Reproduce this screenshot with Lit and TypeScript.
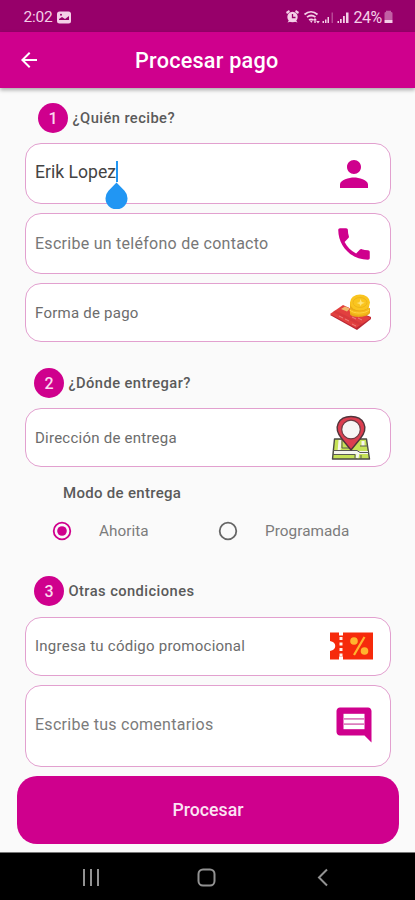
import { LitElement, html, css, svg } from "lit";
import { customElement, property } from "lit/decorators.js";

const icons = {
  person: svg`<svg width="42" height="42" viewBox="0 0 24 24"><path fill="#cf008d" d="M12 12c2.21 0 4-1.79 4-4s-1.79-4-4-4-4 1.790-4 4 1.790 4 4 4zm0 2c-2.670 0-8 1.340-8 4v2h16v-2c0-2.660-5.330-4-8-4z"/></svg>`,
  phone: svg`<svg width="42" height="42" viewBox="0 0 24 24"><path fill="#cf008d" d="M6.62 10.79c1.44 2.83 3.76 5.14 6.59 6.59l2.2-2.2c.27-.27.67-.36 1.02-.24 1.12.37 2.33.57 3.57.57.55 0 1 .45 1 1V20c0 .55-.45 1-1 1-9.39 0-17-7.61-17-17 0-.55.45-1 1-1h3.5c.55 0 1 .45 1 1 0 1.25.2 2.45.57 3.57.11.35.03.74-.25 1.02l-2.2 2.2z"/></svg>`,
  card: svg`<svg width="42" height="42" viewBox="0 0 42 42">
    <path fill="#b92735" d="M0 23l27 15 14-11v-2L14 14z"/>
    <path fill="#e2403f" d="M0 22L13 13 41 26 26 36z"/>
    <path fill="#c9303a" d="M3 20l2-1.500 27 13-2 2z" opacity=".45"/>
    <path fill="#efb66a" d="M11 17l4-2.500 5 2-3 3z"/>
    <path d="M9 24l4 2m2 1l4 2m3-4l4 2m2-1l4 2m-10 4l4 2" stroke="#f09090" stroke-width=".8"/>
    <path fill="#e9ab18" d="M20 19v3c1 4 17 4 20-1v-5z"/>
    <ellipse cx="29.500" cy="18.500" rx="10" ry="5" fill="#f5b91b"/>
    <path fill="#e9ab18" d="M20 10v6c3 5 17 4 19-1V8z"/>
    <ellipse cx="30" cy="10.500" rx="10" ry="8" fill="#fac51f"/>
    <ellipse cx="30" cy="10.500" rx="7" ry="5" fill="none" stroke="#efb51b" stroke-width="1"/>
    <path d="M30.500 7l1.300 3 3 .8-3 1.200-1.300 2-1-2-3-1 3-.8z" fill="#ffe47a"/>
    <path d="M20 18c3 4 15 4 19 0" fill="none" stroke="#ffd441"/></svg>`,
  map: svg`<svg width="42" height="46" viewBox="0 0 42 46">
    <path d="M4.500 24h32l3 20h-37z" fill="#c6e257" stroke="#4a4a45" stroke-width="1.400" stroke-linejoin="round"/>
    <path d="M4 37.500h34M10 25l-1 12M28 38l-1 5M33 26v5" stroke="#f6f6ee" stroke-width="3"/>
    <path d="M3 35.500h24l3 2h9M3 39.500h22v4M12 25v8h7M31 40v4M30 31h8" fill="none" stroke="#5a5a54"/>
    <path d="M21 35l-9-11C2 12 9 1.500 21 1.500S40 12 30 24z" fill="#dc3e50" stroke="#51343b" stroke-width="1.400" stroke-linejoin="round"/>
    <circle cx="21" cy="14.500" r="9.300" fill="#f7f5f5" stroke="#6b3b43" stroke-width="1.200"/></svg>`,
  coupon: svg`<svg width="43" height="28" viewBox="0 0 43 28">
    <path fill="#f62a0b" d="M0 .5h9v3h4v-3h30v27H13v-3H9v3H0V19c7-1 7-9 0-10z"/>
    <path d="M11 5v20" stroke="#fff4ef" stroke-width="3" stroke-dasharray="3 2.500"/>
    <path d="M34.500 5L24 23" stroke="#ffb52e" stroke-width="2.200"/>
    <circle cx="24" cy="9" r="3.800" fill="#ffb52e"/><circle cx="34.500" cy="19" r="3.800" fill="#ffb52e"/></svg>`,
  comment: svg`<svg width="42" height="42" viewBox="0 0 24 24"><path fill="#cf008d" d="M22 4c0-1.100-.9-2-2-2H4c-1.100 0-2 .9-2 2v12c0 1.100.9 2 2 2h14l4 4V4z"/><path fill="#fff" d="M6 5.600h12v8.800H6z"/><path d="M6 8.500h12M6 11.500h12" stroke="#dc7dbd" stroke-width=".9"/></svg>`,
};

@customElement("step-heading")
class StepHeading extends LitElement {
  @property() number = "";
  @property() label = "";
  static styles = css`
    :host { display: flex; align-items: center; gap: 4.5px; height: 30px; padding-left: 34px; }
    .badge { width: 30px; height: 30px; border-radius: 50%; background: #cf008d; color: #fbd9ef; font-size: 16px; font-weight: 500; display: grid; place-items: center; }
    .label { font-size: 14.7px; font-weight: 500; color: #5a5a5a; letter-spacing: 0.43px; white-space: nowrap; }
  `;
  render() {
    return html`<div class="badge">${this.number}</div><div class="label">${this.label}</div>`;
  }
}

@customElement("form-field")
class FormField extends LitElement {
  @property() icon: keyof typeof icons = "person";
  static styles = css`
    :host { display: flex; align-items: center; box-sizing: border-box; margin: 0 24.5px 0 25px; border: 1.3px solid #e2a0cf; border-radius: 16px; background: #fff; padding: 0 15px 0 9px; font-size: 16px; color: #6c6c6c; white-space: nowrap; }
    .text { flex: 1; }
    .icon { width: 42px; display: grid; place-items: center; }
    svg { display: block; }
  `;
  render() {
    return html`<div class="text"><slot></slot></div><div class="icon">${icons[this.icon]}</div>`;
  }
}

@customElement("app-root")
class AppRoot extends LitElement {
  static styles = css`
    :host { display: flex; flex-direction: column; width: 415px; height: 900px; overflow: hidden; background: #fafafa; font-family: Roboto, sans-serif; }
    svg { display: block; }
    .status { height: 32px; flex: none; background: #97006a; color: #f4cfe7; display: flex; align-items: center; padding: 2px 22px 0 23.5px; box-sizing: border-box; font-size: 15.5px; }
    .clock { width: 33.5px; letter-spacing: -0.2px; }
    .right { margin-left: auto; display: flex; align-items: center; }
    .pct { width: 30.5px; font-size: 16px; margin-left: 4px; letter-spacing: -0.5px; }
    .bar { height: 56px; flex: none; background: #cf008d; color: #fff; display: flex; align-items: center; box-shadow: 0 2px 4px #0005; padding-left: 17px; z-index: 1; }
    .title { width: 146px; margin-left: 94px; font-size: 21.6px; font-weight: 500; letter-spacing: 0.25px; white-space: nowrap; }
    .form { flex: 1; display: flex; flex-direction: column; }
    .s1 { margin: 15px 0 10px 4px; }
    .s2 { margin: 26px 0 10px; }
    .s3 { margin: 35px 0 11px; }
    .f1 { height: 61px; margin-bottom: 9px; color: #444; font-size: 17.6px; }
    .f2 { height: 61px; margin-bottom: 9px; font-size: 16px; letter-spacing: 0.27px; color: #777; }
    .f3, .f4, .f5 { height: 59px; font-size: 15px; letter-spacing: 0.24px; }
    .f3 { padding-right: 18px; }
    .f4 { padding-right: 18px; }
    .f5 { padding-right: 18px; padding-bottom: 1px; margin-bottom: 9px; }
    .f6 { height: 82px; padding-bottom: 2.5px; letter-spacing: 0.27px; color: #7b7b7b; }
    .value { position: relative; margin-bottom: 4px; }
    .caret { position: absolute; left: 81px; top: -1px; width: 2px; height: 21px; background: #2196f3; }
    .handle { position: absolute; left: 70px; top: 19px; }
    .mode { margin: 16px 0 0 63px; height: 20px; line-height: 20px; font-size: 15px; font-weight: 500; color: #5a5a5a; letter-spacing: 0.3px; }
    .radios { display: grid; grid-template-columns: 166px 1fr; height: 20px; margin: 18px 0 0 52px; }
    .radio { display: flex; align-items: center; gap: 27px; color: #7c7c7c; font-size: 15.3px; letter-spacing: 0.05px; }
    .submit { height: 68px; margin: 8.5px 16px 0 17px; border: 0; border-radius: 20px; background: #cf008d; color: #fbe3f3; font: 500 17.7px Roboto, sans-serif; }
    .nav { height: 48px; box-sizing: border-box; flex: none; background: #000; border-top: 1px solid #777; }
  `;
  render() {
    return html`
      <div class="status">
        <span class="clock">2:02</span>
        <svg width="14" height="13" viewBox="0 0 14 13"><rect width="14" height="12" y=".5" rx="2.500" fill="#f4cfe7"/><path d="M2 8l3-2 3 2 4-3v4H2z" fill="#97006a"/><circle cx="4" cy="3.800" r="1" fill="#97006a"/></svg>
        <div class="right">
          <svg width="64" height="14" viewBox="0 0 64 14" fill="#f4cfe7">
            <circle cx="6.500" cy="7" r="5.200"/><path d="M0 2l3-2 1 2-3 2zM13 2l-3-2-1 2 3 2zM1.500 12.500l2-3 1.500 2zM11.500 12.500l-2-3-1.500 2z"/><path d="M6.500 4v3.500h3" fill="none" stroke="#97006a" stroke-width="1.300"/>
            <g fill="none" stroke="#f4cfe7" stroke-width="1.700"><path d="M18.500 4.500c4-3.500 9-3.500 13 0M21 7.200c2.500-2 6-2 8.500 0M23 10c1.500-1 3-1 4.500 0"/></g><path d="M23.800 10.500h3l-1.500 2.500zM29 8l2 2.200h-1.300V13h-1.400v-2.800H27zM32 13.500l-1.800-2.500h3.600z"/>
            <path d="M36.500 13v-2H38v2zM39 13v-3.500h1.500V13zM41.500 13V7H43v6z"/><path d="M45.500 13V2.500H47V13z" opacity=".35"/>
            <path d="M51.500 13v-2H53v2zM54 13V9h1.700v4zM57 13V6h1.800v7zM60 13V2.500h2.500V13z"/>
          </svg>
          <span class="pct">24%</span>
          <svg width="9" height="14" viewBox="0 0 9 14"><path d="M.5 3q0-1 1.500-1V.8h5V2q1.500 0 1.500 1v7h-8z" fill="#c25fa4"/><path d="M.5 10h8v3h-8z" fill="#f4cfe7"/></svg>
        </div>
      </div>
      <div class="bar">
        <svg width="24" height="24" viewBox="0 0 24 24"><path fill="#fff" d="M20 11H7.830l5.590-5.590L12 4l-8 8 8 8 1.410-1.410L7.830 13H20v-2z"/></svg>
        <div class="title">Procesar pago</div>
      </div>
      <div class="form">
        <step-heading class="s1" number="1" label="¿Quién recibe?"></step-heading>
        <form-field class="f1" icon="person"><div class="value">Erik Lopez<span class="caret"></span>
          <svg class="handle" width="23" height="28" viewBox="0 0 23 28"><path fill="#2196f3" d="M11.500 1.500l8 8.300a11 11 0 1 1-16 0z"/></svg></div></form-field>
        <form-field class="f2" icon="phone">Escribe un teléfono de contacto</form-field>
        <form-field class="f3" icon="card">Forma de pago</form-field>
        <step-heading class="s2" number="2" label="¿Dónde entregar?"></step-heading>
        <form-field class="f4" icon="map">Dirección de entrega</form-field>
        <div class="mode">Modo de entrega</div>
        <div class="radios">
          <div class="radio"><svg width="20" height="20" viewBox="0 0 20 20"><circle cx="10" cy="10" r="8.300" fill="none" stroke="#cf008d" stroke-width="1.800"/><circle cx="10" cy="10" r="4.800" fill="#cf008d"/></svg>Ahorita</div>
          <div class="radio"><svg width="20" height="20" viewBox="0 0 20 20"><circle cx="10" cy="10" r="8.300" fill="none" stroke="#666" stroke-width="1.800"/></svg>Programada</div>
        </div>
        <step-heading class="s3" number="3" label="Otras condiciones"></step-heading>
        <form-field class="f5" icon="coupon">Ingresa tu código promocional</form-field>
        <form-field class="f6" icon="comment">Escribe tus comentarios</form-field>
        <button class="submit">Procesar</button>
      </div>
      <div class="nav">
        <svg width="415" height="47" viewBox="0 0 415 47" fill="none" stroke="#929292" stroke-width="2"><path d="M84 16v17M91 16v17M98 16v17"/><rect x="198.500" y="16.500" width="16" height="16" rx="4.500"/><path d="M327 16.500l-8 8 8 8"/></svg>
      </div>
    `;
  }
}
